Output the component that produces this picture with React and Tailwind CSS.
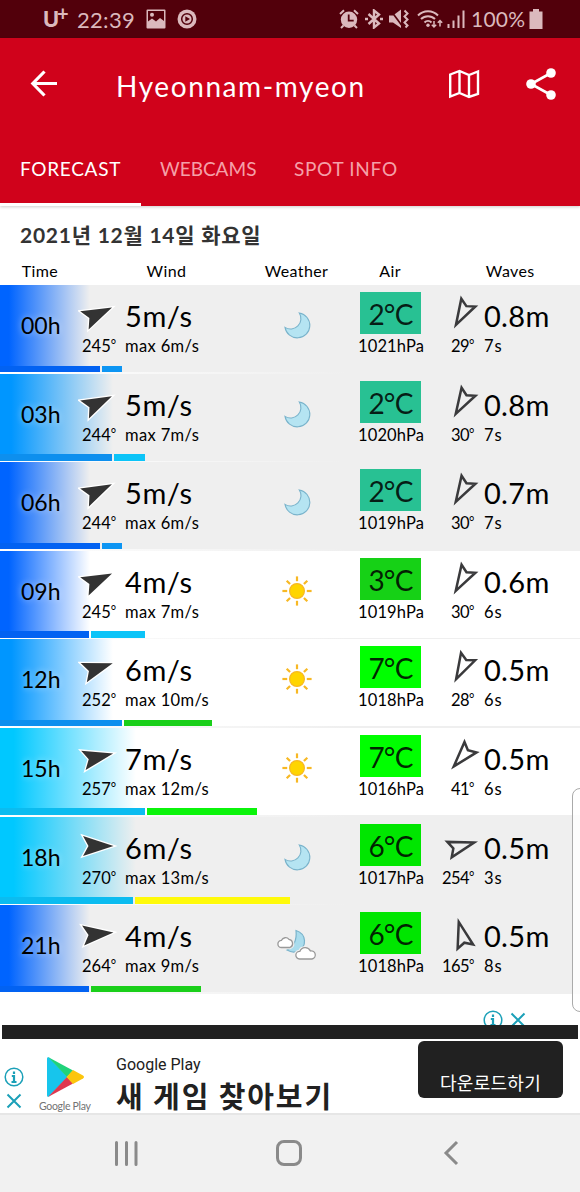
import React from 'react';

const forecast = [
  { time: '00h', dir: 245, speed: 5, max: 6, sky: 'moon', temp: 2, tempBg: 'bg-[#28c193]', hpa: 1021, waveDir: 29, period: 7, wave: '0.8', night: true, fade: 'w-[90px] from-[#0064ff]', bar: 'w-[100px] bg-[#0262f2]', gust: 'w-5 bg-[#0d95f3]' },
  { time: '03h', dir: 244, speed: 5, max: 7, sky: 'moon', temp: 2, tempBg: 'bg-[#28c193]', hpa: 1020, waveDir: 30, period: 7, wave: '0.8', night: true, fade: 'w-[113px] from-[#0096ff]', bar: 'w-[112px] bg-[#0d8fee]', gust: 'w-[31px] bg-[#0cc4f8]' },
  { time: '06h', dir: 244, speed: 5, max: 6, sky: 'moon', temp: 2, tempBg: 'bg-[#28c193]', hpa: 1019, waveDir: 30, period: 7, wave: '0.7', night: true, fade: 'w-[90px] from-[#0064ff]', bar: 'w-[100px] bg-[#0262f2]', gust: 'w-5 bg-[#0d95f3]' },
  { time: '09h', dir: 245, speed: 4, max: 7, sky: 'sun', temp: 3, tempBg: 'bg-[#16d116]', hpa: 1019, waveDir: 30, period: 6, wave: '0.6', night: false, fade: 'w-[90px] from-[#0064ff]', bar: 'w-[89px] bg-[#0262f2]', gust: 'w-[54px] bg-[#0cc4f8]' },
  { time: '12h', dir: 252, speed: 6, max: 10, sky: 'sun', temp: 7, tempBg: 'bg-[#00ff00]', hpa: 1018, waveDir: 28, period: 6, wave: '0.5', night: false, fade: 'w-[113px] from-[#0096ff]', bar: 'w-[122px] bg-[#0d8fee]', gust: 'w-[88px] bg-[#1acf1a]' },
  { time: '15h', dir: 257, speed: 7, max: 12, sky: 'sun', temp: 7, tempBg: 'bg-[#00ff00]', hpa: 1016, waveDir: 41, period: 6, wave: '0.5', night: false, fade: 'w-[136px] from-[#00c8ff]', bar: 'w-[145px] bg-[#0bbcf0]', gust: 'w-[110px] bg-[#0bf40b]' },
  { time: '18h', dir: 270, speed: 6, max: 13, sky: 'moon', temp: 6, tempBg: 'bg-[#00e600]', hpa: 1017, waveDir: 254, period: 3, wave: '0.5', night: true, fade: 'w-[136px] from-[#00c8ff]', bar: 'w-[133px] bg-[#0bbcf0]', gust: 'w-[155px] bg-[#fffa0a]' },
  { time: '21h', dir: 264, speed: 4, max: 9, sky: 'cloudy', temp: 6, tempBg: 'bg-[#00e600]', hpa: 1018, waveDir: 165, period: 8, wave: '0.5', night: true, fade: 'w-[90px] from-[#0064ff]', bar: 'w-[89px] bg-[#0262f2]', gust: 'w-[110px] bg-[#1acf1a]' },
];

// Arrows point right at 270 degrees
const WindArrow = ({ deg }) => (
  <svg className="w-10 h-10 shrink-0" viewBox="-20 -20 40 40">
    <path
      d="M15.5 0 -15 -10 -9.5 0 -15 10Z"
      transform={`rotate(${deg - 270})`}
      fill="#333"
      stroke="#fff"
      strokeWidth="2.6"
      paintOrder="stroke"
    />
  </svg>
);

const WaveArrow = ({ deg }) => (
  <svg className="w-10 h-10 shrink-0" viewBox="-20 -20 40 40">
    <path
      d="M12.5 0 -13 -8 -9 0 -13 8Z"
      transform={`rotate(${deg - 270})`}
      fill="none"
      stroke="#3a3a3c"
      strokeWidth="2.5"
    />
  </svg>
);

const Sun = () => (
  <svg className="w-10 h-10" viewBox="-20 -20 40 40">
    <g stroke="#f7b824" strokeWidth="2.2">
      {[0, 45, 90, 135, 180, 225, 270, 315].map((a) => (
        <path key={a} d="M9.8 0H14.6" transform={`rotate(${a})`} />
      ))}
    </g>
    <circle r="7.4" fill="#ffd500" stroke="#f7b824" strokeWidth="1.2" />
  </svg>
);

const Moon = () => (
  <svg className="w-10 h-10" viewBox="-20 -20 40 40">
    <path
      d="M2.3 -12A12.5 12.5 0 1 1 -12 2.4A10.4 10.4 0 0 0 2.3 -12Z"
      fill="#b5e4f2"
      stroke="#79b3cb"
      strokeWidth="1.1"
    />
  </svg>
);

const CloudyMoon = () => (
  <svg className="w-10 h-10" viewBox="-20 -20 40 40">
    <path d="M-1 -14.5C10 -11 10 2 1 6Q-4 8.5 -10 5C-3 1.5 0 -5 -1 -14.5Z" fill="#a9dced" stroke="#79b3cb" strokeWidth="1.2" />
    <path d="M-15.5 2.5a3.6 3.6 0 0 1 0 -7.2a4.5 4.5 0 0 1 7.5 -1a4.3 4.3 0 0 1 1 8.2Z" fill="#fff" stroke="#efefef" strokeWidth="3.5" />
    <path d="M-15.5 2.5a3.6 3.6 0 0 1 0 -7.2a4.5 4.5 0 0 1 7.5 -1a4.3 4.3 0 0 1 1 8.2Z" fill="#fff" stroke="#999" strokeWidth="1.3" />
    <path d="M2.5 14a3.8 3.8 0 0 1 .3 -7.6a5.8 5.8 0 0 1 10.6 -.5a4.1 4.1 0 0 1 1.5 8.1Z" fill="#fff" stroke="#efefef" strokeWidth="3.5" />
    <path d="M2.5 14a3.8 3.8 0 0 1 .3 -7.6a5.8 5.8 0 0 1 10.6 -.5a4.1 4.1 0 0 1 1.5 8.1Z" fill="#fff" stroke="#999" strokeWidth="1.3" />
  </svg>
);

const skyIcons = { moon: Moon, sun: Sun, cloudy: CloudyMoon };

const Degree = () => <span className="align-[3px] text-[13px] leading-none">°</span>;

const StatusBar = () => (
  <div className="flex h-[38px] items-center bg-[#52000b] pl-[43px] text-[#dbb9bd]">
    <div className="flex w-[24px] items-start">
      <span className="text-[22px] leading-7 font-bold font-['Inter']">U</span>
      <span className="-ml-[2px] text-[20px] leading-4 font-bold">+</span>
    </div>
    <span className="ml-[10px] w-[69px] text-[22px] tracking-[0.3px]">22:39</span>
    <svg className="h-5 w-5" viewBox="0 0 20 20">
      <path fill="currentColor" fillRule="evenodd" d="M1.5 0.5h17a1 1 0 0 1 1 1v17a1 1 0 0 1-1 1h-17a1 1 0 0 1-1-1v-17a1 1 0 0 1 1-1ZM2 2v16h16V2Z" />
      <path fill="currentColor" d="M2 18v-5.5l4-3 4 3 4-3.5L18 12v6Z" />
      <circle cx="6" cy="5.8" r="2" fill="currentColor" />
    </svg>
    <svg className="ml-[11px] h-5 w-5" viewBox="0 0 20 20">
      <circle cx="10" cy="10" r="9.5" fill="currentColor" />
      <circle cx="10" cy="10" r="5.3" fill="none" stroke="#52000b" strokeWidth="1.5" />
      <path d="M8.3 7.2 13 10l-4.7 2.8Z" fill="#52000b" />
    </svg>
    <svg className="ml-[142px] h-5 w-5" viewBox="0 0 20 20">
      <circle cx="10" cy="10.8" r="8.2" fill="currentColor" />
      <path d="M1 5 5 1.2M19 5 15 1.2M4.5 16.5 2 19M15.5 16.5 18 19" stroke="currentColor" strokeWidth="2" />
      <path d="M9.7 5.5v6.2h5" fill="none" stroke="#52000b" strokeWidth="1.8" />
    </svg>
    <svg className="ml-[6px] h-5 w-[18px]" viewBox="0 0 18 20">
      <path d="M3.5 5 14 14.5 9 18.5V1.5L14 5.5 3.5 15" fill="none" stroke="currentColor" strokeWidth="2.4" />
      <path d="M0 10h3M15 10h3" stroke="currentColor" strokeWidth="2.5" />
    </svg>
    <svg className="ml-[6px] h-5 w-5" viewBox="0 0 20 20">
      <path d="M0 6.5h4l8-6v18.5L4 13.5H0Z" fill="currentColor" />
      <path d="M1 .5 14 18" stroke="#52000b" strokeWidth="1.7" />
      <path d="M15.5 1.5l3 3-3 3 3 3-3 3 3 3-2 2" fill="none" stroke="currentColor" strokeWidth="2" />
    </svg>
    <svg className="ml-[8px] h-5 w-[26px]" viewBox="0 0 26 20">
      <path d="M1 6.5a14 14 0 0 1 20 0M4 10a10 10 0 0 1 14 0M7.5 13.5a5 5 0 0 1 7 0" fill="none" stroke="currentColor" strokeWidth="2" />
      <circle cx="11" cy="16.2" r="1.7" fill="currentColor" />
      <path d="M17 12v6M14.8 15.8 17 18l2.2-2.2M23 17.5v-6M20.8 13.7 23 11.5l2.2 2.2" fill="none" stroke="currentColor" strokeWidth="1.5" />
    </svg>
    <svg className="ml-[4px] h-5 w-[18px]" viewBox="0 0 18 20">
      <path d="M1.5 19v-4M6.5 19v-7.5M11.5 19V6.5M16.5 19V1.5" stroke="currentColor" strokeWidth="2" />
    </svg>
    <span className="ml-[6px] w-[54px] text-[21px] tracking-[0.2px]">100%</span>
    <svg className="ml-[4px] h-5 w-[14px]" viewBox="0 0 14 20">
      <path d="M4 0h6v2.5h3.5V20H.5V2.5H4Z" fill="currentColor" />
    </svg>
  </div>
);

const Header = () => (
  <header className="relative h-[168px] bg-[#d0021b] text-white shadow-[0_1px_3px_rgba(0,0,0,0.2)]">
    <div className="flex h-[92px] items-center pl-[30px]">
      <svg className="h-7 w-7" viewBox="0 0 28 28" fill="none" stroke="currentColor" strokeWidth="3.2">
        <path d="M27 13.5H3M14.5 1.5 2.8 13.5l11.7 12" />
      </svg>
      <h1 className="ml-[58px] w-[332px] pt-[3px] text-[28px] tracking-[1.6px]">Hyeonnam-myeon</h1>
      <svg className="h-[30px] w-[32px]" viewBox="0 0 32 30" fill="none" stroke="currentColor" strokeWidth="2.4">
        <path d="M2.2 5.5 11.5 2l9.5 4 9-3.5V25l-9 3-9.5-4-9.3 3.5ZM11.5 2v22M21 6v22" />
      </svg>
      <svg className="ml-[46px] h-8 w-[30px]" viewBox="0 0 30 32">
        <path d="M25 5 5 16l20 11" fill="none" stroke="currentColor" strokeWidth="2.6" />
        <g fill="currentColor">
          <circle cx="25" cy="5" r="4.8" />
          <circle cx="5" cy="16" r="4.8" />
          <circle cx="25" cy="27" r="4.8" />
        </g>
      </svg>
    </div>
    <nav className="flex h-[76px] text-[19px] tracking-[0.7px]">
      <div className="w-[141px] border-b-[3px] border-white pt-[25px] pl-5">FORECAST</div>
      <div className="w-[153px] pt-[25px] pl-[19px] tracking-[0px] text-[#f5a0a8]">WEBCAMS</div>
      <div className="pt-[25px] text-[#f5a0a8]">SPOT INFO</div>
    </nav>
  </header>
);

const ForecastRow = ({ row }) => {
  const Sky = skyIcons[row.sky];
  return (
    <div className={`relative flex h-[88.6px] ${row.night ? 'bg-[#efefef]' : 'bg-white'}`}>
      {/* wind strength fade behind the hour */}
      <div className={`absolute inset-y-0 left-0 bg-linear-to-r from-10% to-transparent ${row.fade}`} />
      <div className="absolute inset-x-0 bottom-0 h-[1.6px] bg-linear-to-r from-white to-[#efefef] to-60%" />
      <div className="absolute bottom-[1.6px] left-0 flex h-[6.5px] gap-[2px]">
        <div className={row.bar} />
        <div className={row.gust} />
      </div>
      <div className="relative w-[78px] pt-[25px] pl-[21px] text-[23px] leading-[30px] text-shadow-[0_0_6px_rgb(255_255_255_/_0.5)]">{row.time}</div>
      <div className="relative flex w-[42px] flex-col pt-[9px]">
        <WindArrow deg={row.dir} />
        <span className="pl-[4px] text-[16.5px] leading-6 whitespace-nowrap">{row.dir}<Degree /></span>
      </div>
      <div className="relative w-[157px] pt-[13px] pl-[5px]">
        <div className="text-[29px] leading-9 tracking-[0.6px]">{row.speed}m/s</div>
        <div className="text-[16.5px] leading-6 tracking-[0.35px]">max {row.max}m/s</div>
      </div>
      <div className="w-[83px] pt-[20px]">
        <Sky />
      </div>
      <div className="w-[62px] pt-[7px] text-center">
        <div className={`h-[42px] w-[61px] text-[28px] leading-[44px] tracking-[-0.8px] text-black/85 ${row.tempBg}`}>{row.temp}°C</div>
        <div className="-mx-2 text-[16.5px] leading-6 tracking-[0.1px]">{row.hpa}hPa</div>
      </div>
      <div className="flex w-[62px] flex-col pt-[9px] pl-[20px]">
        <WaveArrow deg={row.waveDir} />
        <span className="-ml-5 w-[52px] text-right text-[16.5px] leading-6 tracking-[-0.5px] whitespace-nowrap">{row.waveDir}<Degree /></span>
      </div>
      <div className="pt-[13px]">
        <div className="text-[29px] leading-9 tracking-[0.3px]">{row.wave}m</div>
        <div className="text-[16.5px] leading-6 tracking-[0.8px]">{row.period}s</div>
      </div>
    </div>
  );
};

const InfoIcon = () => (
  <svg className="h-5 w-5 shrink-0" viewBox="0 0 20 20">
    <circle cx="10" cy="10" r="8.8" fill="none" stroke="#1ba0b8" strokeWidth="1.5" />
    <path d="M10 4.5v2.6M7.8 9H10v6M7.5 15h5" fill="none" stroke="#1ba0b8" strokeWidth="2.2" />
  </svg>
);

const CloseIcon = () => (
  <svg className="h-4 w-4 shrink-0" viewBox="0 0 16 16">
    <path d="M1.5 1.5l13 13M14.5 1.5l-13 13" stroke="#1ba0b8" strokeWidth="2" />
  </svg>
);

const AdBanner = () => (
  <div className="border-b-2 border-[#e6e6e6] bg-white">
    <div className="flex h-[31px] justify-end gap-[7px] overflow-hidden pt-[16px] pr-[54px]">
      <InfoIcon />
      <div className="pt-[2px]"><CloseIcon /></div>
    </div>
    <div className="mr-[2px] ml-[2px] h-[14px] bg-[#212121]" />
    <div className="flex h-[74px]">
      <div className="flex w-[37px] flex-col items-center gap-[6px] pt-[28px] pr-[10px]">
        <InfoIcon />
        <CloseIcon />
      </div>
      <div className="w-[79px] pt-[18px]">
        <svg className="ml-[10px] h-10 w-[38px]" viewBox="0 0 38 40">
          <path d="M0 2v36c0 2 1 2 2 1.5L20.5 20 2 .5C1 0 0 0 0 2Z" fill="#17c5ec" />
          <path d="M1 0 26 13.5 20 20Z" fill="#20d27a" />
          <path d="M1 40 26 26.5 20 20Z" fill="#e0384f" />
          <path d="M26 13 36 18.5q2 1.5 0 3L26 27 19.5 20Z" fill="#fcc50c" />
        </svg>
        <div className="mt-[1px] ml-[2px] text-[10.5px] leading-4 tracking-[-0.3px] whitespace-nowrap text-[#737373]">Google Play</div>
      </div>
      <div className="w-[302px] pt-[14px] text-[#212121]">
        <div className="font-[Roboto] text-[16px] leading-6">Google Play</div>
        <div className="pt-px font-['Noto_Sans_CJK_KR',sans-serif] text-[29px] leading-[34px] font-bold tracking-[1.9px]">새 게임 찾아보기</div>
      </div>
      <div className="mt-[2px] h-[57px] w-[145px] rounded-md bg-[#212121] pt-[27px] text-center font-['Noto_Sans_CJK_KR',sans-serif] text-[18px] leading-7 tracking-[0.3px] text-white">다운로드하기</div>
    </div>
  </div>
);

const NavBar = () => (
  <div className="flex h-[78px] text-[#8a8a8a]">
    <svg className="mt-[25px] ml-[114px] h-7 w-6" viewBox="0 0 24 28">
      <path d="M2.5 2.5v22M12.5 2.5v22M22 2.5v22" stroke="currentColor" strokeWidth="3" strokeLinecap="round" />
    </svg>
    <div className="mt-[25px] ml-[138px] h-[26px] w-[26px] rounded-[8px] border-[3px] border-current" />
    <svg className="mt-[25px] ml-[141px] h-[26px] w-4" viewBox="0 0 16 26">
      <path d="M14 2 3 13l11 11" fill="none" stroke="currentColor" strokeWidth="3" />
    </svg>
  </div>
);

const App = () => {
  return (
    <div className="relative h-[1192px] w-[580px] overflow-hidden bg-[#f1f1f1] font-['Lato','Noto_Sans_CJK_KR',sans-serif] text-black">
      <StatusBar />
      <Header />
      <main className="bg-white">
        <h2 className="h-[55px] pt-[15px] pl-5 text-[21px] leading-7 font-bold tracking-[0.75px] text-[#333]">2021년 12월 14일 화요일</h2>
        <div className="flex h-6 text-[16px] leading-5 tracking-[0.4px]">
          <span className="w-20 text-center">Time</span>
          <span className="w-[174px] text-center">Wind</span>
          <span className="w-[87px] text-center">Weather</span>
          <span className="w-[101px] text-center">Air</span>
          <span className="w-[140px] text-center">Waves</span>
        </div>
        {forecast.map((row) => (
          <ForecastRow key={row.time} row={row} />
        ))}
      </main>
      <AdBanner />
      <NavBar />
      {/* edge panel handle */}
      <div className="absolute top-[788px] -right-3 h-[224px] w-5 rounded-lg border border-[#aaa] bg-white/80" />
    </div>
  );
};

export default App;
